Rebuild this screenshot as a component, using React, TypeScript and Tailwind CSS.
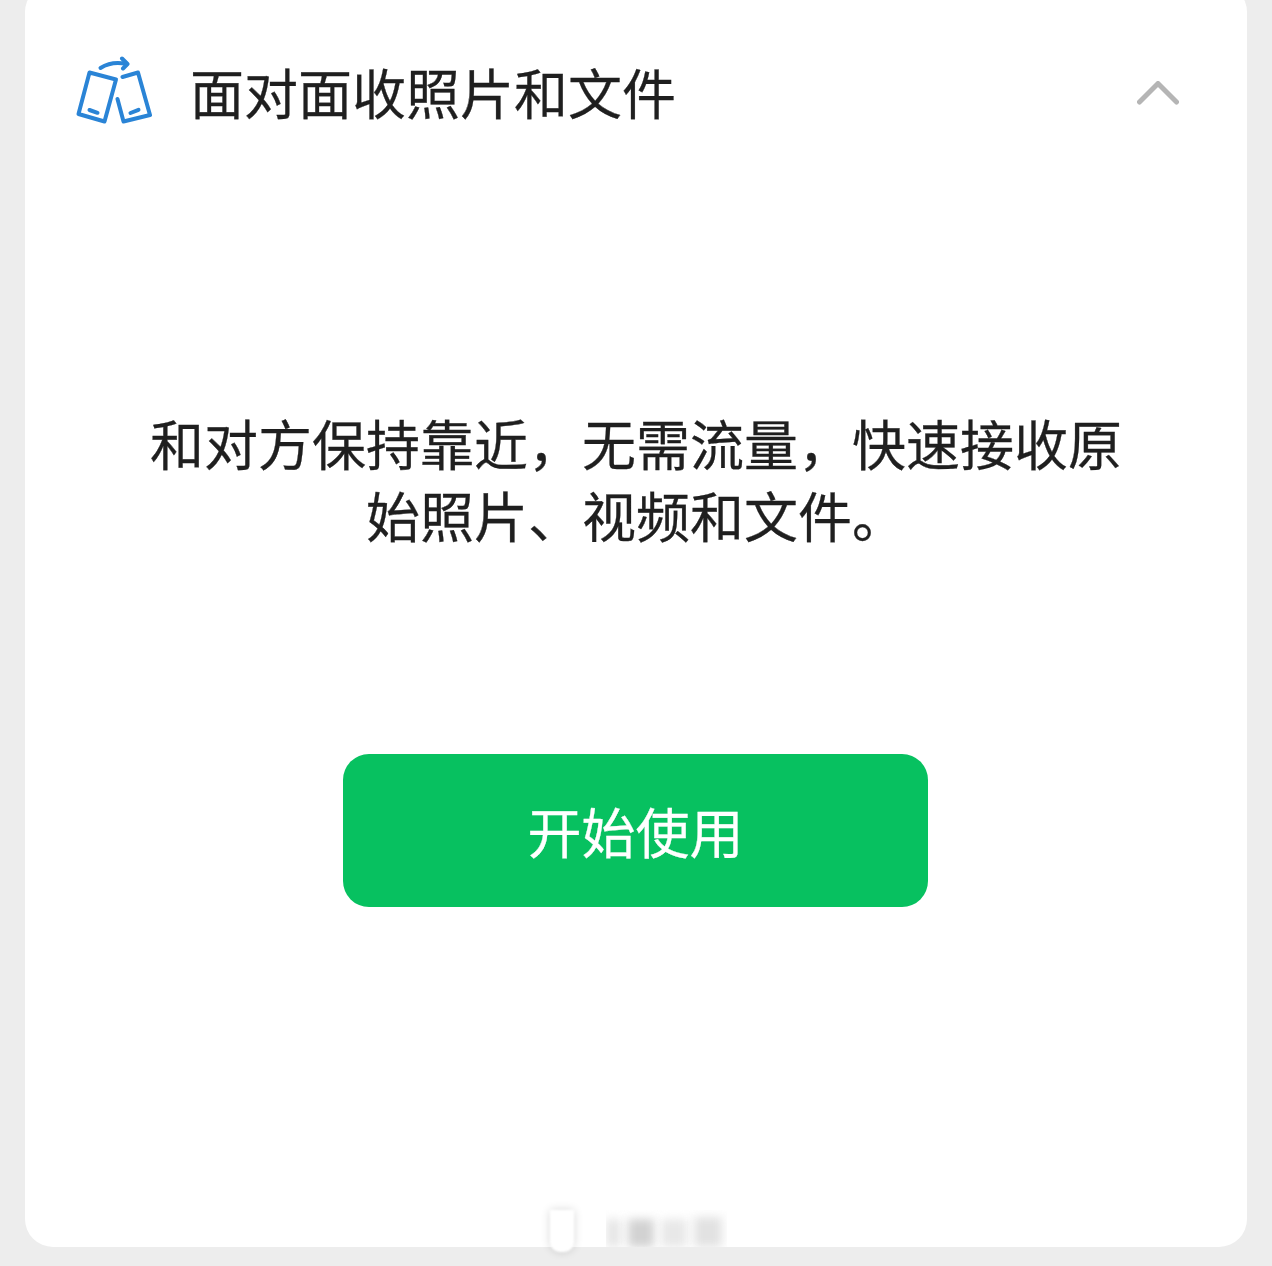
const cjk = { fontFamily: '"Noto Sans CJK SC", "Noto Sans", sans-serif' };

function PhonesIcon() {
  return (
    <svg width="76" height="72" viewBox="76 56 76 72" fill="none" stroke="#2a84d6" strokeWidth="4" strokeLinecap="round" strokeLinejoin="round" className="shrink-0 blur-[0.4px]">
      <path d="M100.500 68 Q112 61 126 64" />
      <path d="M122 58.500 L127.500 64 L123 68.500" />
      <path d="M89.500 72.500 L116 79.500 L104.500 121.500 L78.500 114 Z" />
      <path d="M89.500 110 L97.500 112.800" />
      <path d="M122.500 77 L138 72.500 L150 115 L123.500 121.500 L117.500 99" />
      <path d="M130.500 113 L138.500 109.800" />
    </svg>
  );
}

export default function App() {
  return (
    <div className="relative h-[1266px] w-[1272px] overflow-hidden bg-[#ededed] px-[25px]" style={cjk}>
      <div className="-mt-[16px] flex h-[1263px] flex-col rounded-[28px] bg-white">
        <div className="flex items-center pl-[51px] pr-[67px] pt-[72px]">
          <PhonesIcon />
          <h1 className="ml-[38px] flex-1 text-[54px] leading-[72px] font-normal text-[#1f1f1f] [-webkit-text-stroke:0.3px_#1f1f1f]">面对面收照片和文件</h1>
          <svg width="44" height="26" viewBox="0 0 44 26" fill="none" stroke="#b5b5b5" strokeWidth="5" strokeLinecap="round" strokeLinejoin="round" className="blur-[0.4px]">
            <path d="M3.500 23 L22 4.500 L40.500 23" />
          </svg>
        </div>
        <p className="mx-auto mt-[279px] w-[972px] text-center text-[54px] leading-[72px] text-[#1f1f1f] [-webkit-text-stroke:0.3px_#1f1f1f]">
          和对方保持靠近，无需流量，快速接收原始照片、视频和文件。
        </p>
        <button className="mt-[203px] ml-[318px] flex h-[153px] w-[585px] items-center justify-center rounded-[26px] bg-[#07c160] text-[54px] text-white [-webkit-text-stroke:0.3px_#ffffff]">
          开始使用
        </button>
      </div>
      <div className="absolute left-[545px] top-[1210px] flex h-[43px] w-[182px] items-start">
        <div className="h-[42px] w-[24px] shrink-0 ml-[5px] rounded-b-[10px] bg-white shadow-[0_0_10px_rgba(0,0,0,0.16)] blur-[1px]" />
        <div className="ml-[32px] flex h-[37px] flex-1 items-end gap-[7px] overflow-hidden pb-0">
          <div className="h-[28px] w-[15px] bg-[#e6e6e6] blur-[5px]" />
          <div className="h-[28px] w-[26px] bg-[#d2d2d2] blur-[5px]" />
          <div className="h-[28px] w-[26px] bg-[#e8e8e8] blur-[5px]" />
          <div className="h-[30px] w-[28px] bg-[#e2e2e2] blur-[5px]" />
        </div>
      </div>
    </div>
  );
}
